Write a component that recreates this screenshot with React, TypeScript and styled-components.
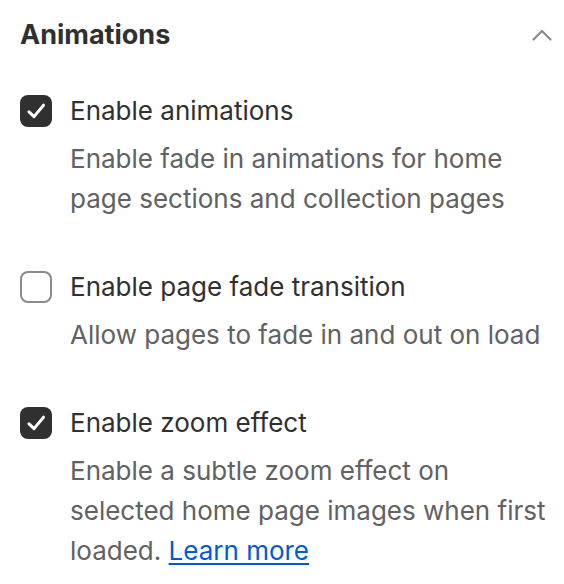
import React from "react";
import styled, { createGlobalStyle } from "styled-components";

const Global = createGlobalStyle`
  html, body { margin: 0; padding: 0; background: #ffffff; }
  body { font-family: Inter, "Noto Sans", sans-serif; -webkit-font-smoothing: antialiased; }
`;

const Panel = styled.section`
  width: 564px;
  padding: 15px 12px 0 20px;
  box-sizing: border-box;
`;

const Header = styled.div`
  display: flex;
  align-items: center;
  justify-content: space-between;
  height: 40px;
  margin-bottom: 40px;
`;

const Title = styled.h2`
  margin: 0;
  font-size: 27px;
  font-weight: 700;
  color: #303030;
  line-height: 40px;
`;

const Chevron = styled.button`
  border: 0;
  background: none;
  padding: 0;
  width: 20px;
  height: 12px;
  display: flex;
  align-items: center;
  justify-content: center;
  color: #8a8a8a;
`;

const List = styled.div`
  display: flex;
  flex-direction: column;
  gap: 52px;
`;

const Option = styled.label`
  display: grid;
  grid-template-columns: 32px 1fr;
  column-gap: 18px;
  align-items: start;
`;

const Box = styled.span<{ $checked: boolean }>`
  position: relative;
  width: 32px;
  height: 32px;
  box-sizing: border-box;
  border-radius: 8px;
  display: block;
  background: ${(p) => (p.$checked ? "#303030" : "#ffffff")};
  border: ${(p) => (p.$checked ? "none" : "2px solid #8a8a8a")};
  svg { display: block; }
`;

const Text = styled.div`
  display: flex;
  flex-direction: column;
  gap: 12px;
`;

const Label = styled.span`
  font-size: 26px;
  line-height: 32px;
  color: #303030;
`;

const Help = styled.span`
  font-size: 26px;
  line-height: 40px;
  color: #616161;
`;

const Link = styled.a`
  color: #005bd3;
  text-decoration: underline;
  text-underline-offset: 3px;
`;

const Check = () => (
  <svg width="32" height="32" viewBox="0 0 32 32" fill="none">
    <path d="M9 16.8 L14 21.6 L23.5 10.2" stroke="#fff" strokeWidth="3" strokeLinecap="round" strokeLinejoin="round" />
  </svg>
);

const Item = ({ checked, label, children }: { checked: boolean; label: string; children: React.ReactNode }) => (
  <Option>
    <Box $checked={checked}>{checked && <Check />}</Box>
    <Text>
      <Label>{label}</Label>
      <Help>{children}</Help>
    </Text>
  </Option>
);

export default function App() {
  return (
    <>
      <Global />
      <Panel>
        <Header>
          <Title>Animations</Title>
          <Chevron aria-label="Collapse">
            <svg width="20" height="12" viewBox="0 0 20 12" fill="none">
              <path d="M1.5 10.5 L10 2 L18.5 10.5" stroke="currentColor" strokeWidth="2.2" strokeLinecap="round" strokeLinejoin="round" />
            </svg>
          </Chevron>
        </Header>
        <List>
          <Item checked label="Enable animations">
            Enable fade in animations for home page sections and collection pages
          </Item>
          <Item checked={false} label="Enable page fade transition">
            Allow pages to fade in and out on load
          </Item>
          <Item checked label="Enable zoom effect">
            Enable a subtle zoom effect on selected home page images when first loaded.{" "}
            <Link href="#">Learn more</Link>
          </Item>
        </List>
      </Panel>
    </>
  );
}
